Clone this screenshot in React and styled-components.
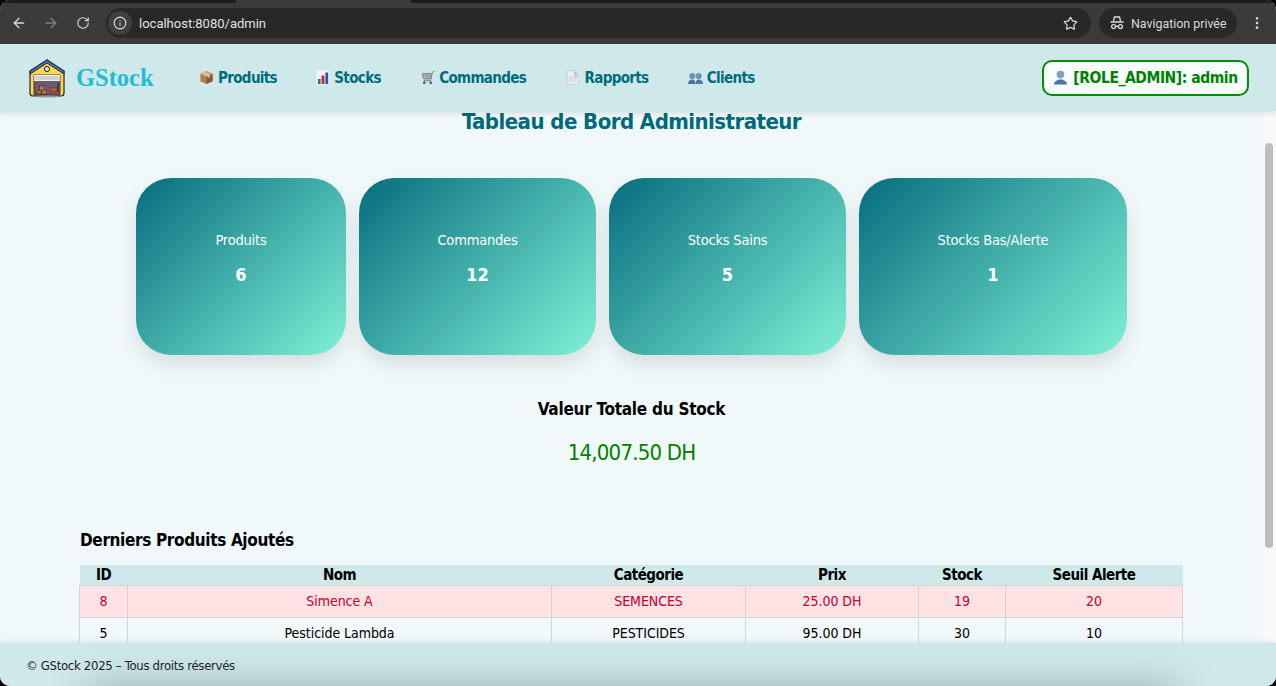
import React from 'react';
import styled, { createGlobalStyle } from 'styled-components';
import { ArrowLeft, ArrowRight, RotateCw, Info, Star, MoreVertical } from 'lucide-react';

const FONT = '"DejaVu Sans Condensed", "DejaVu Sans", sans-serif';

const GlobalStyle = createGlobalStyle`
    html, body {
        margin: 0;
        height: 100%;
        background: #000;
        overflow: hidden;
    }
    * {
        box-sizing: border-box;
    }
`;

// whole browser window
const Frame = styled.div`
    width: 1276px;
    height: 686px;
    display: flex;
    flex-direction: column;
    border-radius: 10px;
    overflow: hidden;
    background: #f0f8fa;
    font-family: ${FONT};
`;

const TabStrip = styled.div`
    height: 3px;
    display: flex;
    background: #3b3b3b;
`;

const TabEdge = styled.div`
    width: ${p => p.$width || 'auto'};
    flex: ${p => (p.$width ? 'none' : 1)};
    margin-left: ${p => p.$gap || 0};
    background: #1c1c1c;
`;

const Toolbar = styled.div`
    height: 41px;
    flex: none;
    display: flex;
    align-items: flex-start;
    padding: 5px 11px 0 11px;
    background: #3b3b3b;
    color: #d8d8d8;
`;

const NavIcon = styled.div`
    width: 16px;
    height: 30px;
    margin-right: 16px;
    display: flex;
    align-items: center;
    justify-content: center;
    opacity: ${p => (p.$dim ? 0.45 : 1)};
`;

const AddressBar = styled.div`
    flex: 1;
    height: 30px;
    margin-left: -1px;
    display: flex;
    align-items: center;
    padding: 0 13px 0 2px;
    border-radius: 15px;
    background: #282828;
`;

const InfoChip = styled.div`
    width: 24px;
    height: 24px;
    display: flex;
    align-items: center;
    justify-content: center;
    border-radius: 50%;
    background: #3f3f3f;
`;

const Url = styled.span`
    flex: 1;
    margin-left: 7px;
    font-family: Roboto, sans-serif;
    font-size: 13px;
    color: #e0e0e0;
`;

const PrivatePill = styled.div`
    width: 138px;
    height: 30px;
    margin-left: 8px;
    display: flex;
    align-items: center;
    gap: 6px;
    padding-left: 10px;
    border-radius: 15px;
    background: #282828;
    font-family: Roboto, sans-serif;
    font-size: 12.4px;
    color: #d8d8d8;
`;

const MenuDots = styled.div`
    width: 16px;
    height: 30px;
    margin-left: 12px;
    display: flex;
    align-items: center;
    justify-content: center;
`;

// application header
const Header = styled.header`
    height: 67px;
    flex: none;
    display: flex;
    align-items: center;
    padding: 0 27px 0 28px;
    position: relative;
    z-index: 2;
    background: #cfe9ea;
    box-shadow: 0 2px 6px rgba(0, 0, 0, 0.12);
`;

const Logo = styled.div`
    display: flex;
    align-items: center;
    gap: 10px;
    width: 171px;
`;

const LogoText = styled.span`
    font-family: "Liberation Serif", serif;
    font-weight: 700;
    font-size: 24.5px;
    color: #25bcd2;
`;

const NavLinks = styled.nav`
    flex: 1;
    display: flex;
    align-items: center;
    gap: 39.3px;
`;

const NavLink = styled.a`
    display: flex;
    align-items: center;
    gap: 4px;
    font-size: 15px;
    letter-spacing: -0.65px;
    font-weight: 700;
    color: #006d7e;
`;

const UserBadge = styled.div`
    width: 207px;
    height: 36px;
    display: flex;
    align-items: center;
    justify-content: center;
    gap: 5px;
    border: 2px solid #088a08;
    border-radius: 10px;
    background: #f6fdfb;
    font-size: 15.5px;
    letter-spacing: -0.45px;
    font-weight: 700;
    color: #008000;
`;

const Body = styled.div`
    flex: 1;
    min-height: 0;
    display: flex;
`;

const Content = styled.main`
    flex: 1;
    min-width: 0;
    background: #f0f8fa;
`;

const ScrollTrack = styled.div`
    width: 13px;
    flex: none;
    padding: 32px 3px 0 2px;
    background: #f9f9f9;
`;

const ScrollThumb = styled.div`
    height: 405px;
    border-radius: 4px;
    background: #bdbdbd;
`;

const Title = styled.h1`
    margin: 0;
    text-align: center;
    font-size: 22px;
    letter-spacing: -0.55px;
    line-height: 22px;
    font-weight: 700;
    color: #00697a;
`;

const Cards = styled.section`
    display: flex;
    justify-content: center;
    gap: 13px;
    margin-top: 45px;
`;

const Card = styled.div`
    width: ${p => p.$width}px;
    height: 177px;
    display: flex;
    flex-direction: column;
    align-items: center;
    padding-top: 52px;
    border-radius: 35px;
    background: linear-gradient(135deg, #066d7e, #7ff0d5);
    box-shadow: 0 10px 20px rgba(0, 0, 0, 0.1);
    color: #fff;
`;

const CardLabel = styled.div`
    font-size: 14.5px;
    letter-spacing: -0.2px;
    line-height: 20px;
`;

const CardValue = styled.div`
    margin-top: 14px;
    font-size: 18px;
    line-height: 22px;
    font-weight: 700;
`;

const TotalBox = styled.section`
    margin-top: 43px;
    text-align: center;
`;

const TotalLabel = styled.div`
    font-size: 17px;
    letter-spacing: -0.25px;
    line-height: 22px;
    font-weight: 700;
    color: #000;
`;

const TotalValue = styled.div`
    margin-top: 20px;
    font-size: 22px;
    letter-spacing: -0.8px;
    line-height: 26px;
    color: #008000;
`;

const Latest = styled.section`
    margin: 63px 0 0 79px;
`;

const LatestTitle = styled.h2`
    margin: 0 0 14px 1px;
    font-size: 17px;
    letter-spacing: -0.35px;
    line-height: 22px;
    font-weight: 700;
    color: #000;
`;

const Table = styled.table`
    width: 1103px;
    table-layout: fixed;
    border-collapse: collapse;
    text-align: center;
`;

const Th = styled.th`
    height: 20px;
    padding: 0;
    font-size: 15px;
    letter-spacing: -0.5px;
    line-height: 18px;
    font-weight: 700;
    color: #000;
    background: #cfe9ea;
`;

const Row = styled.tr`
    background: ${p => (p.$alert ? '#ffe2e3' : 'transparent')};
    color: ${p => (p.$alert ? '#c4002b' : '#000')};
`;

const Td = styled.td`
    height: 32px;
    padding: 0;
    font-size: 14px;
    letter-spacing: -0.05px;
    border: 1px solid #d2d4d6;
`;

const Footer = styled.footer`
    height: 43px;
    flex: none;
    display: flex;
    align-items: center;
    padding: 1px 0 0 26px;
    position: relative;
    z-index: 2;
    overflow: hidden;
    background: #cfe8ea;
    box-shadow: 0 -1px 5px rgba(0, 0, 0, 0.1);
    font-size: 13px;
    letter-spacing: -0.3px;
    color: #1c1c1c;

    &::after {
        content: '';
        position: absolute;
        left: 100px;
        right: 110px;
        bottom: -20px;
        height: 8px;
        box-shadow: 0 0 36px 10px rgba(70, 105, 108, 0.5);
    }
`;

const BoxIcon = () => (
    <svg width="15" height="15" viewBox="0 0 16 16">
        <path d="M8 1l6.5 3v8L8 15l-6.5-3V4z" fill="#b5794a" />
        <path d="M8 7.5V15l6.5-3V4z" fill="#8a5a33" />
        <path d="M1.5 4L8 7.5 14.5 4 8 1z" fill="#d6a77c" />
        <path d="M5 2.4l6.5 3.2v2l-2 1V6.5L3 3.3z" fill="#e8d4b8" opacity=".8" />
    </svg>
);

const ChartIcon = () => (
    <svg width="14" height="15" viewBox="0 0 14 15">
        <rect x="0.5" y="0.5" width="13" height="14" fill="#f4f6f6" />
        <rect x="2" y="9" width="2.6" height="5" fill="#0f8f3c" />
        <rect x="5.6" y="5.5" width="2.8" height="8.5" fill="#d0202a" />
        <rect x="9.4" y="2.5" width="2.8" height="11.5" fill="#1f58b8" />
    </svg>
);

const CartIcon = () => (
    <svg width="15" height="15" viewBox="0 0 16 15">
        <path d="M15.5 1L13 2l-1 7H4L2.5 3.5H12" fill="#b9c0c0" stroke="#6f7777" strokeWidth="1" />
        <path d="M3 6h9.5M7 3.5V9M10 3.5V9" stroke="#7f8888" strokeWidth=".7" />
        <path d="M4 11h8" stroke="#666" strokeWidth="1" />
        <circle cx="4.5" cy="13" r="1.3" fill="#444" />
        <circle cx="11.5" cy="13" r="1.3" fill="#444" />
    </svg>
);

const DocIcon = () => (
    <svg width="15" height="15" viewBox="0 0 15 15">
        <path d="M2 .5h7l4 4v10H2z" fill="#eceeee" stroke="#c2c6c6" strokeWidth=".7" />
        <path d="M9 .5v4h4z" fill="#b8bdbd" />
        <path d="M4 7h4M4 9h7M4 11h7" stroke="#c8cccc" strokeWidth=".8" />
        <rect x="9.5" y="5.5" width="2.5" height="2" fill="#8fb5d8" />
    </svg>
);

const PeopleIcon = () => (
    <svg width="15" height="14" viewBox="0 0 15 14">
        <circle cx="4.3" cy="5" r="3" fill="#6e8fb8" />
        <path d="M0 13c0-3 2-4.5 4.3-4.5S7.4 10 7.4 13z" fill="#52729f" />
        <circle cx="10.7" cy="5" r="3" fill="#6e8fb8" />
        <path d="M7.6 13c0-3 1-4.5 3.1-4.5S15 10 15 13z" fill="#52729f" />
    </svg>
);

const PersonIcon = () => (
    <svg width="15" height="15" viewBox="0 0 15 15">
        <circle cx="7.5" cy="4.6" r="3.8" fill="#7f9fc2" />
        <path d="M1 14.5c0-3.2 3-3.8 4.6-5h3.8c1.6 1.2 4.6 1.8 4.6 5z" fill="#50739f" />
    </svg>
);

const WarehouseLogo = () => (
    <svg width="38" height="40" viewBox="0 0 38 40">
        <path d="M2 13L19 2l17 11v22c0 2-1 3-3 3H5c-2 0-3-1-3-3z" fill="#fbd64f" stroke="#20242c" strokeWidth="1.2" />
        <path d="M2 16v-3L19 2l17 11v3L19 5z" fill="#4f75c6" stroke="#20242c" strokeWidth="1" />
        <circle cx="19" cy="11" r="2.6" fill="#cfe9ea" stroke="#20242c" strokeWidth="1" />
        <rect x="6" y="17" width="26" height="20" fill="#6b5a70" stroke="#20242c" strokeWidth=".8" />
        <rect x="6" y="17" width="26" height="6" fill="#f1f1f1" />
        <path d="M6 19h26M6 21h26" stroke="#9a9aa5" strokeWidth=".7" />
        <rect x="9" y="32" width="4.5" height="4" fill="#b5683f" stroke="#3a2418" strokeWidth=".5" />
        <rect x="14" y="32" width="4.5" height="4" fill="#c9794a" stroke="#3a2418" strokeWidth=".5" />
        <rect x="11.5" y="28" width="4.5" height="4" fill="#c9794a" stroke="#3a2418" strokeWidth=".5" />
        <rect x="22" y="30" width="7" height="3" fill="#cf5a3c" stroke="#3a2418" strokeWidth=".5" />
        <rect x="22" y="33.5" width="7" height="1.6" fill="#c22f2f" />
        <path d="M30 25v9" stroke="#20242c" strokeWidth=".9" />
        <ellipse cx="19" cy="38.5" rx="12" ry="1" fill="#8f9a9c" />
    </svg>
);

const IncognitoIcon = () => (
    <svg width="16" height="16" viewBox="0 0 16 16" fill="none" stroke="#dcdcdc" strokeWidth="1.3">
        <path d="M4.5 6l1-4h5l1 4" />
        <path d="M1.5 7h13" strokeWidth="1.5" />
        <circle cx="4.6" cy="11.6" r="2" />
        <circle cx="11.4" cy="11.6" r="2" />
        <path d="M6.6 11.4h2.8" />
    </svg>
);

const links = [
    { label: 'Produits', icon: <BoxIcon /> },
    { label: 'Stocks', icon: <ChartIcon /> },
    { label: 'Commandes', icon: <CartIcon /> },
    { label: 'Rapports', icon: <DocIcon /> },
    { label: 'Clients', icon: <PeopleIcon /> },
];

const cards = [
    { label: 'Produits', value: 6, width: 210 },
    { label: 'Commandes', value: 12, width: 237 },
    { label: 'Stocks Sains', value: 5, width: 237 },
    { label: 'Stocks Bas/Alerte', value: 1, width: 268 },
];

const columns = [
    { label: 'ID', width: 48 },
    { label: 'Nom', width: 424 },
    { label: 'Catégorie', width: 194 },
    { label: 'Prix', width: 173 },
    { label: 'Stock', width: 87 },
    { label: 'Seuil Alerte', width: 177 },
];

const rows = [
    { alert: true, cells: ['8', 'Simence A', 'SEMENCES', '25.00 DH', '19', '20'] },
    { alert: false, cells: ['5', 'Pesticide Lambda', 'PESTICIDES', '95.00 DH', '30', '10'] },
];

const App = () => {
    return (
        <Frame>
            <GlobalStyle />
            <TabStrip>
                <TabEdge $width="236px" />
                <TabEdge $gap="175px" />
            </TabStrip>
            <Toolbar>
                <NavIcon><ArrowLeft size={16} /></NavIcon>
                <NavIcon $dim><ArrowRight size={16} /></NavIcon>
                <NavIcon><RotateCw size={14} /></NavIcon>
                <AddressBar>
                    <InfoChip><Info size={14} /></InfoChip>
                    <Url>localhost:8080/admin</Url>
                    <Star size={15} />
                </AddressBar>
                <PrivatePill>
                    <IncognitoIcon />
                    <span>Navigation privée</span>
                </PrivatePill>
                <MenuDots><MoreVertical size={16} /></MenuDots>
            </Toolbar>
            <Header>
                <Logo>
                    <WarehouseLogo />
                    <LogoText>GStock</LogoText>
                </Logo>
                <NavLinks>
                    {links.map(link => (
                        <NavLink key={link.label}>
                            {link.icon}
                            {link.label}
                        </NavLink>
                    ))}
                </NavLinks>
                <UserBadge>
                    <PersonIcon />
                    [ROLE_ADMIN]: admin
                </UserBadge>
            </Header>
            <Body>
                <Content>
                    <Title>Tableau de Bord Administrateur</Title>
                    <Cards>
                        {cards.map(card => (
                            <Card key={card.label} $width={card.width}>
                                <CardLabel>{card.label}</CardLabel>
                                <CardValue>{card.value}</CardValue>
                            </Card>
                        ))}
                    </Cards>
                    <TotalBox>
                        <TotalLabel>Valeur Totale du Stock</TotalLabel>
                        <TotalValue>14,007.50 DH</TotalValue>
                    </TotalBox>
                    <Latest>
                        <LatestTitle>Derniers Produits Ajoutés</LatestTitle>
                        <Table>
                            <colgroup>
                                {columns.map(col => <col key={col.label} width={col.width} />)}
                            </colgroup>
                            <thead>
                                <tr>
                                    {columns.map(col => <Th key={col.label}>{col.label}</Th>)}
                                </tr>
                            </thead>
                            <tbody>
                                {rows.map(row => (
                                    <Row key={row.cells[0]} $alert={row.alert}>
                                        {row.cells.map((cell, i) => <Td key={i}>{cell}</Td>)}
                                    </Row>
                                ))}
                            </tbody>
                        </Table>
                    </Latest>
                </Content>
                <ScrollTrack>
                    <ScrollThumb />
                </ScrollTrack>
            </Body>
            <Footer>© GStock 2025 – Tous droits réservés</Footer>
        </Frame>
    );
};

export default App;
